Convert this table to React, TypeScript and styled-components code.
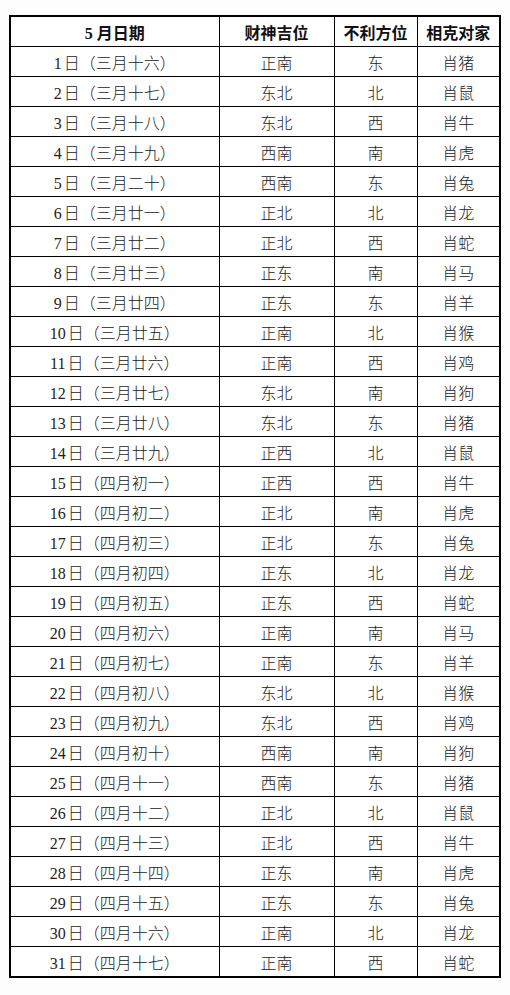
import styled, { createGlobalStyle } from 'styled-components';

const lunar = [
  '三月十六', '三月十七', '三月十八', '三月十九', '三月二十', '三月廿一', '三月廿二',
  '三月廿三', '三月廿四', '三月廿五', '三月廿六', '三月廿七', '三月廿八', '三月廿九',
  '四月初一', '四月初二', '四月初三', '四月初四', '四月初五', '四月初六', '四月初七',
  '四月初八', '四月初九', '四月初十', '四月十一', '四月十二', '四月十三', '四月十四',
  '四月十五', '四月十六', '四月十七',
];

const wealth = [
  '正南', '东北', '东北', '西南', '西南', '正北', '正北', '正东', '正东', '正南', '正南',
  '东北', '东北', '正西', '正西', '正北', '正北', '正东', '正东', '正南', '正南', '东北',
  '东北', '西南', '西南', '正北', '正北', '正东', '正东', '正南', '正南',
];

const bad = ['东', '北', '西', '南'];
const zodiac = ['猪', '鼠', '牛', '虎', '兔', '龙', '蛇', '马', '羊', '猴', '鸡', '狗'];

const rows = lunar.map((l, i) => ({
  day: i + 1,
  lunar: l,
  wealth: wealth[i],
  bad: bad[i % 4],
  clash: '肖' + zodiac[i % 12],
}));

export default function App() {
  return (
    <Page>
      <GlobalStyle />
      <Table>
        <colgroup>
          <col style={{ width: 209 }} />
          <col style={{ width: 115 }} />
          <col style={{ width: 83 }} />
          <col style={{ width: 83 }} />
        </colgroup>
        <thead>
          <tr>
            <Head>5 月日期</Head>
            <Head>财神吉位</Head>
            <Head>不利方位</Head>
            <Head>相克对家</Head>
          </tr>
        </thead>
        <tbody>
          {rows.map((r) => (
            <tr key={r.day}>
              <Cell>
                <Num>{r.day}</Num>日（{r.lunar}）
              </Cell>
              <Cell>{r.wealth}</Cell>
              <Cell>{r.bad}</Cell>
              <Cell>{r.clash}</Cell>
            </tr>
          ))}
        </tbody>
      </Table>
    </Page>
  );
}

const GlobalStyle = createGlobalStyle`
  html, body {
    margin: 0;
    padding: 0;
    background: #fdfdfd;
  }
`;

const Page = styled.div`
  width: 510px;
  height: 995px;
  padding: 15px 0 0 9px;
  box-sizing: border-box;
  font-family: "Liberation Serif", "Noto Sans CJK SC", serif;
  color: #222;
`;

const Table = styled.table`
  width: 490px;
  table-layout: fixed;
  border-collapse: collapse;
  background: #fff;
  border: 2px solid #000;
`;

const Head = styled.th`
  height: 29px;
  padding: 0;
  border: 1px solid #000;
  font-size: 16px;
  font-weight: 700;
  color: #111;
  text-align: center;
  vertical-align: middle;
`;

const Cell = styled.td`
  height: 29px;
  padding: 0;
  border: 1px solid #000;
  font-size: 16px;
  font-weight: 300;
  text-align: center;
  vertical-align: middle;
`;

const Num = styled.span`
  margin-right: 2px;
`;
